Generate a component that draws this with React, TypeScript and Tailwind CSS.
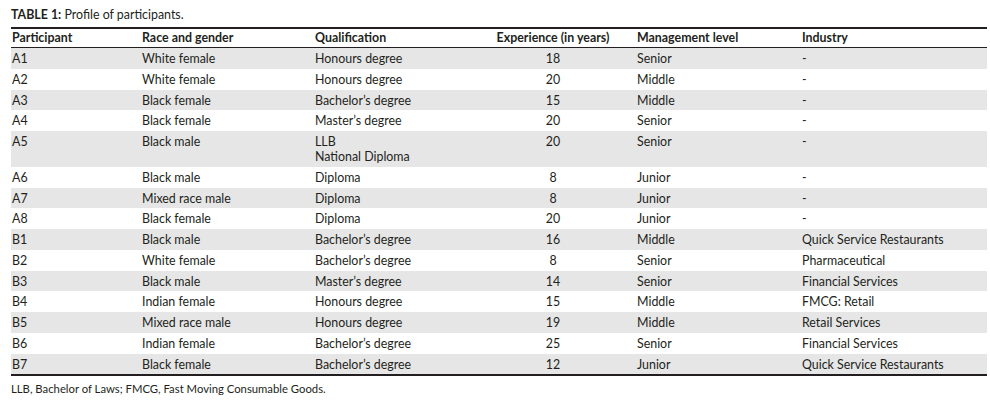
const rows: [string, string, string[], string, string, string][] = [
  ["A1", "White female", ["Honours degree"], "18", "Senior", "-"],
  ["A2", "White female", ["Honours degree"], "20", "Middle", "-"],
  ["A3", "Black female", ["Bachelor’s degree"], "15", "Middle", "-"],
  ["A4", "Black female", ["Master’s degree"], "20", "Senior", "-"],
  ["A5", "Black male", ["LLB", "National Diploma"], "20", "Senior", "-"],
  ["A6", "Black male", ["Diploma"], "8", "Junior", "-"],
  ["A7", "Mixed race male", ["Diploma"], "8", "Junior", "-"],
  ["A8", "Black female", ["Diploma"], "20", "Junior", "-"],
  ["B1", "Black male", ["Bachelor’s degree"], "16", "Middle", "Quick Service Restaurants"],
  ["B2", "White female", ["Bachelor’s degree"], "8", "Senior", "Pharmaceutical"],
  ["B3", "Black male", ["Master’s degree"], "14", "Senior", "Financial Services"],
  ["B4", "Indian female", ["Honours degree"], "15", "Middle", "FMCG: Retail"],
  ["B5", "Mixed race male", ["Honours degree"], "19", "Middle", "Retail Services"],
  ["B6", "Indian female", ["Bachelor’s degree"], "25", "Senior", "Financial Services"],
  ["B7", "Black female", ["Bachelor’s degree"], "12", "Junior", "Quick Service Restaurants"],
];

export default function App() {
  return (
    <div
      className="w-[990px] h-[414px] bg-white text-[#231f20] pl-[11px] pt-[7px] text-[12.4px] leading-[15px]"
      style={{ fontFamily: "Lato, 'Open Sans', sans-serif" }}
    >
      <p className="h-[19.5px]">
        <span className="font-bold">TABLE 1:</span> Profile of participants.
      </p>
      <table className="w-[976px] table-fixed border-collapse border-t-[2.5px] border-b-[2.5px] border-[#231f20]">
        <colgroup>
          <col className="w-[131px]" />
          <col className="w-[173px]" />
          <col className="w-[154px]" />
          <col className="w-[168px]" />
          <col className="w-[165px]" />
          <col className="w-[185px]" />
        </colgroup>
        <thead>
          <tr className="h-[20px] border-b-[1.5px] border-[#231f20] font-bold text-left">
            <th className="pl-[1px] font-bold">Participant</th>
            <th className="font-bold">Race and gender</th>
            <th className="font-bold">Qualification</th>
            <th className="font-bold text-center">Experience (in years)</th>
            <th className="font-bold">Management level</th>
            <th className="font-bold">Industry</th>
          </tr>
        </thead>
        <tbody>
          {rows.map((r, i) => (
            <tr key={r[0]} className={i % 2 === 0 ? "bg-[#e6e6e6]" : "bg-white"}>
              <td className="pl-[1px] align-top pt-[3px] pb-[2.75px]">{r[0]}</td>
              <td className="align-top pt-[3px] pb-[2.75px]">{r[1]}</td>
              <td className="align-top pt-[3px] pb-[2.75px]">
                {r[2].map((q) => (
                  <div key={q}>{q}</div>
                ))}
              </td>
              <td className="align-top pt-[3px] pb-[2.75px] text-center">{r[3]}</td>
              <td className="align-top pt-[3px] pb-[2.75px]">{r[4]}</td>
              <td className="align-top pt-[3px] pb-[2.75px]">{r[5]}</td>
            </tr>
          ))}
        </tbody>
      </table>
      <p className="mt-[5px] text-[11.3px]">LLB, Bachelor of Laws; FMCG, Fast Moving Consumable Goods.</p>
    </div>
  );
}
